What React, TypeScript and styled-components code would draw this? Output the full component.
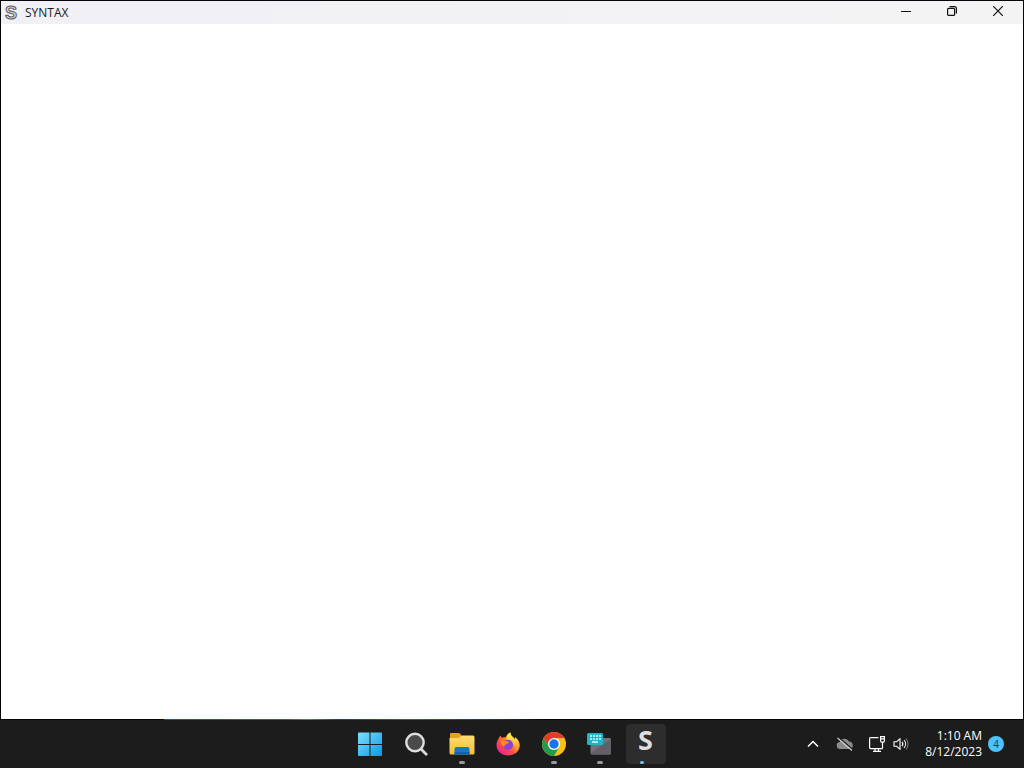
import React from "react";
import styled, { createGlobalStyle } from "styled-components";

const GlobalStyle = createGlobalStyle`
  * { box-sizing: border-box; }
  html, body { margin: 0; }
  body {
    font-family: "Open Sans", "Noto Sans", sans-serif;
    font-size: 12px;
    background: #1c1c1c;
  }
  button { font: inherit; color: inherit; border: 0; padding: 0; background: transparent; }
  svg { display: block; }
`;

const Desktop = styled.div`
  display: flex;
  flex-direction: column;
  min-height: 100vh;
`;

const AppWindow = styled.main`
  flex: 1;
  display: flex;
  flex-direction: column;
  background: #fff;
  border: 1px solid #05050c;
  border-bottom: 0;
`;

const WallpaperEdge = styled.div`
  height: 1px;
  background: linear-gradient(
    90deg,
    #05050c 16%,
    #1c50b0 16%,
    #1f5cc0 28%,
    #3a78d8 30%,
    #16408c 33%,
    #1f5cc0 40%,
    #123478 49%,
    #05050c 53%
  );
`;

const TitleBar = styled.header`
  display: flex;
  align-items: flex-start;
  justify-content: space-between;
  height: 23px;
  padding: 0 2px 0 3px;
  background: linear-gradient(90deg, #f0f0f5, #f4f3f4);
`;

const Title = styled.h1`
  display: flex;
  align-items: center;
  gap: 6px;
  height: 23px;
  margin: 0;
  color: #1b1b1b;
  font-size: 12px;
  font-weight: 400;
  line-height: 16px;
`;

const WindowControls = styled.div`
  display: flex;
`;

const ControlButton = styled.button`
  display: grid;
  place-items: center;
  width: 46px;
  height: 20px;
  color: #111;
`;

const Taskbar = styled.footer`
  display: grid;
  grid-template-columns: 1fr auto 1fr;
  align-items: center;
  height: 48px;
  padding-right: 9px;
  background: #1c1c1c;
  color: #fff;
`;

const Apps = styled.nav`
  grid-column: 2;
  display: flex;
  gap: 6px;
`;

const AppButton = styled.button<{ $active?: boolean }>`
  display: flex;
  flex-direction: column;
  align-items: center;
  justify-content: space-between;
  width: 40px;
  height: 40px;
  padding-top: 8px;
  border-radius: 4px;
  background: ${(p) => (p.$active ? "#2d2d2d" : "transparent")};
`;

const Indicator = styled.span<{ $state?: "open" | "active" }>`
  width: ${(p) => (p.$state === "active" ? 4 : 6)}px;
  height: 3px;
  margin-right: ${(p) => (p.$state === "active" ? 8 : 0)}px;
  border-radius: 2px;
  background: ${(p) =>
    p.$state === "active" ? "#60c8f0" : p.$state === "open" ? "#9a9a9a" : "transparent"};
`;

const Tray = styled.div`
  display: flex;
  align-items: center;
  justify-content: flex-end;
  padding-right: 11px;
`;

const TrayButton = styled.button<{ $width: number }>`
  display: grid;
  place-items: center;
  width: ${(p) => p.$width}px;
  height: 40px;
`;

const Clock = styled.button`
  display: flex;
  flex-direction: column;
  align-items: flex-end;
  padding: 0 6px 0 16px;
  font-size: 12px;
  line-height: 16px;
`;

const Badge = styled.button`
  width: 16px;
  height: 16px;
  border-radius: 50%;
  background: #4cc2ff;
  color: #12384d;
  font-size: 10px;
  line-height: 16px;
  text-align: center;
`;

const SyntaxMark = styled.span`
  height: 24px;
  color: #dedede;
  font-size: 27px;
  font-weight: 700;
  line-height: 16px;
`;

const TitleLogo = () => (
  <svg width="15" height="22" viewBox="0 0 15 22" aria-hidden="true">
    <text x="7" y="17" textAnchor="middle" fontFamily="Liberation Sans, sans-serif" fontSize="18" fontWeight="700" fill="#d4d4d8" stroke="#5c5c5c" strokeWidth="1">
      S
    </text>
  </svg>
);

const StartIcon = () => (
  <svg width="24" height="24" viewBox="0 0 24 24" aria-hidden="true">
    <defs>
      <linearGradient id="start" x1="0" y1="0" x2="24" y2="24" gradientUnits="userSpaceOnUse">
        <stop stopColor="#7fe0fb" />
        <stop offset="1" stopColor="#0a98ec" />
      </linearGradient>
    </defs>
    <path fill="url(#start)" d="M1 .5h10.500V12H0V1.500a1 1 0 0 1 1-1zM12.500.5H23a1 1 0 0 1 1 1V12H12.500zM0 13h11.500v11H1a1 1 0 0 1-1-1zM12.500 13H24v10a1 1 0 0 1-1 1H12.500z" />
  </svg>
);

const SearchIcon = () => (
  <svg width="24" height="24" viewBox="0 0 24 24" fill="none" aria-hidden="true">
    <path d="m17 17 5.200 5.200" stroke="#d8d8d8" strokeWidth="2.800" strokeLinecap="round" />
    <circle cx="11" cy="10.500" r="8.700" fill="#4a4a4a" stroke="#dedede" strokeWidth="2.400" />
  </svg>
);

const FolderIcon = () => (
  <svg width="26" height="24" viewBox="0 0 26 24" aria-hidden="true">
    <defs>
      <linearGradient id="folder" x1="0" y1="4" x2="0" y2="23" gradientUnits="userSpaceOnUse">
        <stop stopColor="#ffdc70" />
        <stop offset="1" stopColor="#f5bd35" />
      </linearGradient>
    </defs>
    <path fill="#e6a117" d="M2 1h7.500c.7 0 1.200.2 1.700.7L13 4l-3 4H1V2a1 1 0 0 1 1-1z" />
    <path fill="url(#folder)" d="M1 6h8.500L13 3.500h11a1.500 1.500 0 0 1 1.500 1.500v16a1.500 1.500 0 0 1-1.500 1.500H2A1.500 1.500 0 0 1 .5 21V6z" />
    <path fill="#1976c5" d="M7.500 15h11a2 2 0 0 1 2 2v5.500h-15V17a2 2 0 0 1 2-2z" />
    <path fill="#1261ab" d="M5.500 20h15v2.500h-15z" />
  </svg>
);

const FirefoxIcon = () => (
  <svg width="24" height="24" viewBox="0 0 24 24" aria-hidden="true">
    <defs>
      <linearGradient id="fox" x1="20" y1="2" x2="4" y2="21" gradientUnits="userSpaceOnUse">
        <stop stopColor="#fff04a" />
        <stop offset=".35" stopColor="#ff9b28" />
        <stop offset=".65" stopColor="#ff5041" />
        <stop offset="1" stopColor="#e92390" />
      </linearGradient>
      <linearGradient id="flame" x1="16" y1="0" x2="19" y2="20" gradientUnits="userSpaceOnUse">
        <stop stopColor="#fff36b" />
        <stop offset=".6" stopColor="#ffbd2f" />
        <stop offset="1" stopColor="#ff7139" />
      </linearGradient>
    </defs>
    <path fill="url(#fox)" d="M2.600 6.800C3 5.300 3.700 4.300 4.600 3.500c.1 1 .4 1.700 1 2.300C7 5 8.500 5 9.700 5.500 10.500 3 12 1.400 14.500.5c-.2 2 .8 3.200 2.300 4.500 1.100.9 1.700 1.700 2.200 2.800.3-.8.300-1.600.1-2.500 2.900 2.100 4.400 5 4.400 8.200C23.500 19.300 18.500 23.500 12 23.500S.5 19 .5 13c0-2.300.7-4.400 2.100-6.200z" />
    <path fill="url(#flame)" d="M14.500.5c-.2 2 .8 3.200 2.300 4.500 1.100.9 1.700 1.700 2.200 2.800.3-.8.300-1.600.1-2.500 2.900 2.100 4.400 5 4.400 8.200 0 3.500-2 6.500-5 8.200 1.500-2.700 1.700-6.200-.3-8.700-1.800-2.200-5.500-2.500-7.500-5-.8-3 .8-6 3.800-7.500z" />
    <circle cx="12" cy="12.800" r="5.100" fill="#8b43d6" />
    <path fill="#ff8a2d" d="M4.500 9.500c1.600-1.400 3.500-1.400 5.500-.4 1 .6 2.300.6 3 .7 0 1.500-2.500 2-3.500 2.700-.6.500-.5 1.700-1.500 2.300-1.500-.9-3-2.500-3.500-5.300z" />
  </svg>
);

const ChromeIcon = () => (
  <svg width="24" height="24" viewBox="0 0 24 24" aria-hidden="true">
    <circle cx="12" cy="12" r="12" fill="#fbc116" />
    <path fill="#e33b2e" d="M1.610 6A12 12 0 0 1 22.390 6H12L6.800 15z" />
    <path fill="#249b4a" d="M1.610 6A12 12 0 0 0 12 24l5.200-9L12 17.500 6.800 15z" />
    <circle cx="12" cy="12" r="6" fill="#fff" />
    <circle cx="12" cy="12" r="4.700" fill="#1a73e8" />
  </svg>
);

const KeyboardIcon = () => (
  <svg width="26" height="24" viewBox="0 0 26 24" aria-hidden="true">
    <rect x="3.500" y="6" width="20.500" height="16.500" rx="1.500" fill="#727278" />
    <path fill="#606066" d="M3.500 21 24 7v14a1.500 1.500 0 0 1-1.500 1.500H5A1.500 1.500 0 0 1 3.500 21z" />
    <rect x="0" y="1" width="16" height="12" rx="1.500" fill="#20b5c9" />
    <path stroke="#d9ffff" strokeWidth="1.500" strokeDasharray="2 1" d="M3 4h11M3 7h11" />
    <path stroke="#d9ffff" strokeWidth="1.500" d="M5 10h6" />
  </svg>
);

const taskbarApps: { name: string; icon: React.ReactNode; state?: "open" | "active" }[] = [
  { name: "Start", icon: <StartIcon /> },
  { name: "Search", icon: <SearchIcon /> },
  { name: "File Explorer", icon: <FolderIcon />, state: "open" },
  { name: "Firefox", icon: <FirefoxIcon /> },
  { name: "Chrome", icon: <ChromeIcon />, state: "open" },
  { name: "On-Screen Keyboard", icon: <KeyboardIcon />, state: "open" },
  { name: "Syntax", icon: <SyntaxMark>S</SyntaxMark>, state: "active" },
];

export default function App() {
  return (
    <Desktop>
      <GlobalStyle />
      <AppWindow>
        <TitleBar>
          <Title>
            <TitleLogo />
            SYNTAX
          </Title>
          <WindowControls>
            <ControlButton aria-label="Minimize">
              <svg width="10" height="10" viewBox="0 0 10 10" stroke="currentColor">
                <path d="M0 5.500h10" />
              </svg>
            </ControlButton>
            <ControlButton aria-label="Restore">
              <svg width="10" height="10" viewBox="0 0 10 10" fill="none" stroke="currentColor" strokeWidth="1.200">
                <rect x=".6" y="2.400" width="7" height="7" rx="1" />
                <path d="M2.500.6H7.500a1.900 1.900 0 0 1 1.900 1.900v5" />
              </svg>
            </ControlButton>
            <ControlButton aria-label="Close">
              <svg width="10" height="10" viewBox="0 0 10 10" stroke="currentColor" strokeWidth="1.200">
                <path d="m0 0 10 10M10 0 0 10" />
              </svg>
            </ControlButton>
          </WindowControls>
        </TitleBar>
      </AppWindow>
      <WallpaperEdge />
      <Taskbar>
        <Apps aria-label="Taskbar">
          {taskbarApps.map((app) => (
            <AppButton key={app.name} aria-label={app.name} $active={app.state === "active"}>
              {app.icon}
              <Indicator $state={app.state} />
            </AppButton>
          ))}
        </Apps>
        <Tray>
          <TrayButton $width={32} aria-label="Show hidden icons">
            <svg width="12" height="8" viewBox="0 0 12 8" fill="none" stroke="#fff" strokeWidth="1.500">
              <path d="m1 6.500 5-5 5 5" />
            </svg>
          </TrayButton>
          <TrayButton $width={32} aria-label="OneDrive">
            <svg width="18" height="16" viewBox="0 0 18 16" fill="none">
              <path fill="#8c8c8c" d="M4.500 13a3.500 3.500 0 0 1-.6-7A5 5 0 0 1 13 5.500a3.800 3.800 0 0 1 .8 7.500z" />
              <path d="m2.800 1.500 14.500 12.500" stroke="#1c1c1c" strokeWidth="1.500" />
              <path d="m1.500 2 14.500 12.500" stroke="#d0d0d0" strokeWidth="1.200" />
            </svg>
          </TrayButton>
          <TrayButton $width={32} aria-label="Network">
            <svg width="16" height="16" viewBox="0 0 16 16" fill="none" stroke="#fff" strokeWidth="1.200">
              <path d="M9.500 1.600H1.600a1 1 0 0 0-1 1v9a1 1 0 0 0 1 1h11.900M4 15.400h8M6 12.600v2.800M9.500 12.600v2.800" />
              <path d="M11.600.6h3.800v4.500a1 1 0 0 1-1 1h-1.800a1 1 0 0 1-1-1zM11.600 2.800h3.800M13.500 6.100v6.500" />
            </svg>
          </TrayButton>
          <TrayButton $width={16} aria-label="Volume">
            <svg width="16" height="14" viewBox="0 0 16 14" fill="none" stroke="#fff" strokeWidth="1.100">
              <path d="M1 4.800h2.500L7 1.600v10.800L3.500 9.200H1z" strokeLinejoin="round" />
              <path d="M9 4.800a3.500 3.500 0 0 1 0 4.400M11 3a6 6 0 0 1 0 8" />
              <path d="M13 1.500a8.500 8.500 0 0 1 0 11" stroke="#777" />
            </svg>
          </TrayButton>
          <Clock aria-label="Date and time">
            <span>1:10 AM</span>
            <span>8/12/2023</span>
          </Clock>
          <Badge aria-label="4 notifications">4</Badge>
        </Tray>
      </Taskbar>
    </Desktop>
  );
}
